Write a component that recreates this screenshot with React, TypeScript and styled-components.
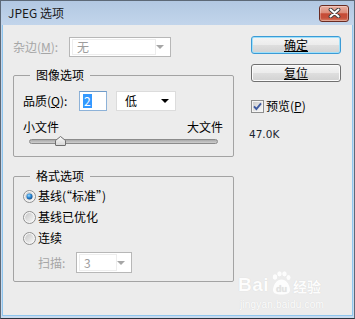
import React from "react";
import styled, { createGlobalStyle, css } from "styled-components";

const Global = createGlobalStyle`
  html, body { margin: 0; padding: 0; background: #ffffff; }
  body { font-family: "Noto Sans CJK SC", "Noto Sans", sans-serif; }
  * { box-sizing: border-box; }
`;

const Window = styled.div`
  position: relative;
  width: 355px;
  height: 319px;
  display: flex;
  flex-direction: column;
  background: linear-gradient(to bottom, #b2c8e2 0px, #c2d5eb 24px, #c9dbef 100%);
  border: 1px solid #5d6977;
  border-bottom-color: #2c333c;
  padding: 0 1px 2px 1px;
`;

const TitleBar = styled.div`
  height: 24px;
  flex: none;
  display: flex;
  align-items: center;
  justify-content: space-between;
  padding-left: 6px;
`;

const TitleText = styled.div`
  font-size: 12px;
  line-height: 14px;
  color: #1a1a1a;
`;

const CloseBtn = styled.div`
  width: 30px;
  height: 17px;
  margin-right: 4px;
  border: 1px solid #6a2c22;
  border-radius: 3px;
  background: linear-gradient(
    to bottom,
    #eab0a2 0%,
    #dc8c7a 45%,
    #c64b36 52%,
    #c6513c 80%,
    #d9846a 100%
  );
  box-shadow: inset 0 0 0 1px rgba(255, 255, 255, 0.3);
  display: flex;
  align-items: center;
  justify-content: center;
`;

const Body = styled.div`
  flex: 1;
  display: flex;
  background: #ececec;
  border: 1px solid #8fc6ee;
  border-top: 0;
  padding: 11px 0 0 10px;
`;

const LeftCol = styled.div`
  width: 221px;
  display: flex;
  flex-direction: column;
`;

const RightCol = styled.div`
  width: 90px;
  margin-left: 17px;
  display: flex;
  flex-direction: column;
`;

const Label = styled.span<{ $disabled?: boolean; $width?: number }>`
  font-size: 12px;
  line-height: 14px;
  white-space: nowrap;
  color: ${(p) => (p.$disabled ? "#a6a6a6" : "#000000")};
  ${(p) =>
    p.$width !== undefined &&
    css`
      width: ${p.$width}px;
      flex: none;
    `}
`;

const U = styled.span`
  text-decoration: underline;
`;

const MatteRow = styled.div`
  margin-top: 1px;
  height: 20px;
  display: flex;
  align-items: center;
`;

const Combo = styled.div<{ $w: number; $h: number; $disabled?: boolean }>`
  width: ${(p) => p.$w}px;
  height: ${(p) => p.$h}px;
  flex: none;
  display: flex;
  align-items: center;
  background: #ffffff;
  border: 1px solid ${(p) => (p.$disabled ? "#b7b7b7" : "#dcdcdc")};
  padding-left: ${(p) => (p.$disabled ? 2 : 6)}px;
  padding-right: 6px;
`;

const ComboField = styled.div<{ $disabled?: boolean }>`
  flex: 1;
  height: 100%;
  display: flex;
  align-items: center;
  font-size: 12px;
  line-height: 14px;
  padding-left: ${(p) => (p.$disabled ? 4 : 2)}px;
  color: ${(p) => (p.$disabled ? "#9d9d9d" : "#000")};
  ${(p) =>
    p.$disabled &&
    css`
      margin: 1px 0;
      height: calc(100% - 2px);
      border: 1px solid #ededed;
    `}
`;

const Group = styled.fieldset<{ $top: number }>`
  margin: ${(p) => p.$top}px 0 0 0;
  padding: 0;
  min-width: 0;
  border: 1px solid #a3a3a3;
  border-radius: 2px;
`;

const Legend = styled.legend`
  margin-left: 16px;
  padding: 0 6px;
  font-size: 12px;
  line-height: 14px;
  color: #000;
`;

const GroupInner = styled.div<{ $pad: string }>`
  padding: ${(p) => p.$pad};
  display: flex;
  flex-direction: column;
`;

const QualityRow = styled.div`
  height: 20px;
  display: flex;
  align-items: center;
`;

const TextBox = styled.div`
  width: 28px;
  height: 20px;
  flex: none;
  background: #fff;
  border: 1px solid #8db2d8;
  border-top-color: #6f9bc8;
  padding-left: 3px;
  display: flex;
  align-items: center;
`;

const Selected = styled.span`
  background: #3399ff;
  color: #ffffff;
  font-size: 12px;
  line-height: 14px;
  padding: 0 1px;
`;

const SizeRow = styled.div`
  margin-top: 9px;
  display: flex;
  justify-content: space-between;
`;

const Slider = styled.div`
  position: relative;
  height: 10px;
  margin: 2px 5px 0 6px;
`;

const Track = styled.div`
  margin-top: 3px;
  height: 5px;
  border-radius: 3px;
  border: 1px solid #8b8b8b;
  background: linear-gradient(to bottom, #a9a9a9, #cfcfcf);
`;

const Thumb = styled.svg`
  position: absolute;
  top: 0;
`;

const RadioRow = styled.label<{ $gap?: number }>`
  height: 14px;
  margin-top: ${(p) => p.$gap ?? 0}px;
  display: flex;
  align-items: center;
  gap: 2px;
`;

const ScanRow = styled.div`
  margin-top: 7px;
  padding-left: 15px;
  display: flex;
  align-items: center;
`;

const Button = styled.div<{ $default?: boolean; $gap?: number }>`
  height: 18px;
  margin-top: ${(p) => p.$gap ?? 0}px;
  border-radius: 3px;
  display: flex;
  align-items: center;
  justify-content: center;
  font-size: 12px;
  line-height: 14px;
  color: #000;
  background: linear-gradient(
    to bottom,
    #f4f4f4 0%,
    #ececec 48%,
    #dedede 52%,
    #d2d2d2 100%
  );
  border: 1px solid ${(p) => (p.$default ? "#3b9bd6" : "#707070")};
  box-shadow: inset 0 0 0 1px ${(p) => (p.$default ? "#9fe0fa" : "#fbfbfb")};
  text-decoration: underline;
`;

const CheckRow = styled.label`
  margin-top: 17px;
  height: 14px;
  display: flex;
  align-items: center;
  gap: 2px;
`;

const SizeInfo = styled.div`
  margin-top: 14px;
  margin-left: -2px;
  font-family: "DejaVu Sans", "Liberation Sans", sans-serif;
  font-size: 10.5px;
  line-height: 14px;
  color: #1b2530;
`;

const Watermark = styled.div`
  position: absolute;
  left: 237px;
  top: 270px;
  display: flex;
  flex-direction: column;
  align-items: flex-start;
  color: #ffffff;
  opacity: 0.9;
  text-shadow: 0 0 1px rgba(0, 0, 0, 0.12);
  pointer-events: none;
`;

const WmTop = styled.div`
  display: flex;
  align-items: flex-end;
  height: 24px;
`;

const WmBai = styled.span`
  font-family: "Liberation Sans", "Arial", sans-serif;
  font-weight: bold;
  font-size: 19px;
  line-height: 20px;
  letter-spacing: 0.5px;
`;

const WmJy = styled.span`
  font-family: "Noto Sans CJK SC", sans-serif;
  font-size: 14px;
  line-height: 18px;
  margin-left: 2px;
  font-weight: bold;
`;

const WmUrl = styled.span`
  font-family: "Liberation Sans", sans-serif;
  font-size: 10px;
  line-height: 12px;
  margin-left: 2px;
  margin-top: 4px;
  letter-spacing: 0.2px;
`;

const Arrow: React.FC<{ color: string }> = ({ color }) => (
  <svg width="8" height="4" viewBox="0 0 8 4" style={{ flex: "none" }}>
    <polygon points="0,0 8,0 4,4" fill={color} />
  </svg>
);

const Radio: React.FC<{ checked?: boolean }> = ({ checked }) => (
  <svg width="13" height="13" viewBox="0 0 13 13" style={{ flex: "none" }}>
    <defs>
      <linearGradient id="rgInner" x1="0" y1="0" x2="1" y2="1">
        <stop offset="0" stopColor="#c8c8c8" />
        <stop offset="1" stopColor="#f6f6f6" />
      </linearGradient>
      <radialGradient id="rgDot" cx="0.4" cy="0.35" r="0.75">
        <stop offset="0" stopColor="#9fdcff" />
        <stop offset="0.45" stopColor="#2d8ad6" />
        <stop offset="1" stopColor="#0a3c78" />
      </radialGradient>
    </defs>
    <circle cx="6.5" cy="6.5" r="6" fill="#f5f5f5" stroke="#8f8f8f" />
    <circle cx="6.5" cy="6.5" r="4.4" fill="url(#rgInner)" />
    {checked && <circle cx="6.5" cy="6.5" r="3" fill="url(#rgDot)" />}
  </svg>
);

const CheckBox: React.FC = () => (
  <svg width="13" height="13" viewBox="0 0 13 13" style={{ flex: "none" }}>
    <defs>
      <linearGradient id="cbInner" x1="0" y1="0" x2="1" y2="1">
        <stop offset="0" stopColor="#cdcdcd" />
        <stop offset="1" stopColor="#f7f7f7" />
      </linearGradient>
    </defs>
    <rect x="0.5" y="0.5" width="12" height="12" fill="#f4f4f4" stroke="#8e8f8f" />
    <rect x="2" y="2" width="9" height="9" fill="url(#cbInner)" />
    <path d="M3 6.3 L5.4 9 L10 3.4" fill="none" stroke="#3e5aa0" strokeWidth="1.9" />
  </svg>
);

const SliderThumb: React.FC<{ left: number }> = ({ left }) => (
  <Thumb width="11" height="10" viewBox="0 0 11 10" style={{ left }}>
    <defs>
      <linearGradient id="thumbG" x1="0" y1="0" x2="0" y2="1">
        <stop offset="0" stopColor="#fbfbfb" />
        <stop offset="1" stopColor="#d6d6d6" />
      </linearGradient>
    </defs>
    <path
      d="M0.5 4.5 L5.5 0.5 L10.5 4.5 L10.5 9 Q10.5 9.5 10 9.5 L1 9.5 Q0.5 9.5 0.5 9 Z"
      fill="url(#thumbG)"
      stroke="#6f6f6f"
    />
  </Thumb>
);

const Paw: React.FC = () => (
  <svg width="20" height="24" viewBox="0 0 20 24" style={{ flex: "none", marginLeft: 2 }}>
    <ellipse cx="4" cy="6" rx="2.2" ry="2.8" fill="#fff" />
    <ellipse cx="8.5" cy="2.8" rx="2.2" ry="2.6" fill="#fff" />
    <ellipse cx="13.5" cy="2.8" rx="2.2" ry="2.6" fill="#fff" />
    <ellipse cx="17.5" cy="6.5" rx="2" ry="2.6" fill="#fff" />
    <path d="M10.5 8.5 C5 8.5 2 15 2 19 C2 22 4.5 23.5 10.5 23.5 C16.5 23.5 19 22 19 19 C19 15 16 8.5 10.5 8.5 Z" fill="#fff" />
    <text x="10.5" y="21" fontSize="9" fontWeight="bold" fontFamily="Liberation Sans, sans-serif" textAnchor="middle" fill="#e2e2e2">du</text>
  </svg>
);

export default function App() {
  return (
    <>
      <Global />
      <Window>
        <TitleBar>
          <TitleText>JPEG 选项</TitleText>
          <CloseBtn>
            <svg width="13" height="10" viewBox="0 0 13 10">
              <path d="M2.5 1.5 L10.5 8.5 M10.5 1.5 L2.5 8.5" stroke="#3c3c3c" strokeWidth="3.8" strokeLinecap="round" />
              <path d="M2.5 1.5 L10.5 8.5 M10.5 1.5 L2.5 8.5" stroke="#ffffff" strokeWidth="2" strokeLinecap="round" />
            </svg>
          </CloseBtn>
        </TitleBar>
        <Body>
          <LeftCol>
            <MatteRow>
              <Label $disabled $width={56}>
                杂边(<U>M</U>):
              </Label>
              <Combo $w={102} $h={20} $disabled>
                <ComboField $disabled>无</ComboField>
                <Arrow color="#a6a6a6" />
              </Combo>
            </MatteRow>

            <Group $top={11}>
              <Legend>图像选项</Legend>
              <GroupInner $pad="9px 10px 10px 9px">
                <QualityRow>
                  <Label $width={56}>
                    品质(<U>Q</U>):
                  </Label>
                  <TextBox>
                    <Selected>2</Selected>
                  </TextBox>
                  <Combo $w={60} $h={20} style={{ marginLeft: 9 }}>
                    <ComboField>低</ComboField>
                    <Arrow color="#000" />
                  </Combo>
                </QualityRow>
                <SizeRow>
                  <Label>小文件</Label>
                  <Label>大文件</Label>
                </SizeRow>
                <Slider>
                  <Track />
                  <SliderThumb left={26} />
                </Slider>
              </GroupInner>
            </Group>

            <Group $top={12}>
              <Legend>格式选项</Legend>
              <GroupInner $pad="6px 10px 8px 9px">
                <RadioRow>
                  <Radio checked />
                  <Label>基线(“标准”)</Label>
                </RadioRow>
                <RadioRow $gap={7}>
                  <Radio />
                  <Label>基线已优化</Label>
                </RadioRow>
                <RadioRow $gap={7}>
                  <Radio />
                  <Label>连续</Label>
                </RadioRow>
                <ScanRow>
                  <Label $disabled $width={38}>
                    扫描:
                  </Label>
                  <Combo $w={56} $h={21} $disabled>
                    <ComboField $disabled>3</ComboField>
                    <Arrow color="#a6a6a6" />
                  </Combo>
                </ScanRow>
              </GroupInner>
            </Group>
          </LeftCol>

          <RightCol>
            <Button $default>确定</Button>
            <Button $gap={10}>复位</Button>
            <CheckRow>
              <CheckBox />
              <Label>
                预览(<U>P</U>)
              </Label>
            </CheckRow>
            <SizeInfo>47.0K</SizeInfo>
          </RightCol>
        </Body>
        <Watermark>
          <WmTop>
            <WmBai>Bai</WmBai>
            <Paw />
            <WmJy>经验</WmJy>
          </WmTop>
          <WmUrl>jingyan.baidu.com</WmUrl>
        </Watermark>
      </Window>
    </>
  );
}
